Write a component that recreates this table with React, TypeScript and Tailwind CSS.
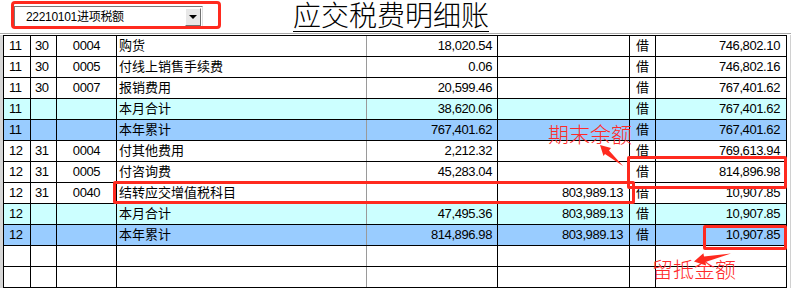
import React from "react";

type Row = {
  m?: string;
  d?: string;
  no?: string;
  memo?: string;
  debit?: string;
  credit?: string;
  dir?: string;
  bal?: string;
  tone?: "cyan" | "blue";
};

const rows: Row[] = [
  { m: "11", d: "30", no: "0004", memo: "购货", debit: "18,020.54", dir: "借", bal: "746,802.10" },
  { m: "11", d: "30", no: "0005", memo: "付线上销售手续费", debit: "0.06", dir: "借", bal: "746,802.16" },
  { m: "11", d: "30", no: "0007", memo: "报销费用", debit: "20,599.46", dir: "借", bal: "767,401.62" },
  { m: "11", memo: "本月合计", debit: "38,620.06", dir: "借", bal: "767,401.62", tone: "cyan" },
  { m: "11", memo: "本年累计", debit: "767,401.62", dir: "借", bal: "767,401.62", tone: "blue" },
  { m: "12", d: "31", no: "0004", memo: "付其他费用", debit: "2,212.32", dir: "借", bal: "769,613.94" },
  { m: "12", d: "31", no: "0005", memo: "付咨询费", debit: "45,283.04", dir: "借", bal: "814,896.98" },
  { m: "12", d: "31", no: "0040", memo: "结转应交增值税科目", credit: "803,989.13", dir: "借", bal: "10,907.85" },
  { m: "12", memo: "本月合计", debit: "47,495.36", credit: "803,989.13", dir: "借", bal: "10,907.85", tone: "cyan" },
  { m: "12", memo: "本年累计", debit: "814,896.98", credit: "803,989.13", dir: "借", bal: "10,907.85", tone: "blue" },
  {},
  {},
];

const font = { fontFamily: '"Liberation Sans", "Noto Sans CJK SC", sans-serif' };

const LedgerRow = ({ r }: { r: Row }) => {
  const bg =
    r.tone === "cyan" ? "bg-[#ccffff]" : r.tone === "blue" ? "bg-[#99ccff]" : "bg-white";
  return (
    <div
      className={`grid grid-cols-[27px_26px_60px_250px_131px_132px_26px_131px] h-[21px] border-b border-black text-[13px] leading-[20px] text-black ${bg}`}
    >
      <div className="border-r border-black pl-[5px] tracking-[-0.4px]">{r.m}</div>
      <div className="border-r border-black pl-[4px] tracking-[-0.4px]">{r.d}</div>
      <div className="border-r border-black text-center tracking-[-0.4px]">{r.no}</div>
      <div className="border-r border-[#9a9a9a] pl-[2px]">{r.memo}</div>
      <div className="border-r border-black text-right pr-[5px] tracking-[-0.4px]">{r.debit}</div>
      <div className="border-r border-black text-right pr-[6px] tracking-[-0.4px]">{r.credit}</div>
      <div className="border-r border-black text-center">{r.dir}</div>
      <div className="border-r border-black text-right pr-[6px] tracking-[-0.4px]">{r.bal}</div>
    </div>
  );
};

export default function App() {
  return (
    <div className="relative w-[791px] h-[291px] bg-white overflow-hidden" style={font}>
      {/* header: account picker + title */}
      <div className="flex h-[34px] border-b border-[#a8a8a8]">
        <div className="ml-[14px] mt-[6px] w-[189px] h-[21px] flex items-center border border-t-[#7a7a7a] border-l-[#7a7a7a] border-b-[#e0e0e0] border-r-[#e0e0e0] bg-white">
          <span className="flex-1 pl-[11px] text-[12px] leading-none tracking-[-0.3px]">22210101进项税额</span>
          <div className="w-[16px] h-[18px] mr-[1px] flex items-center justify-center bg-[#e8e8e8] border border-t-white border-l-white border-b-[#707070] border-r-[#707070]">
            <div className="w-0 h-0 border-l-[4px] border-r-[4px] border-t-[4px] border-l-transparent border-r-transparent border-t-black" />
          </div>
        </div>
        <div className="ml-[90px] mt-[2px] h-[30px] text-[28px] leading-[29px] font-light border-b border-black">
          应交税费明细账
        </div>
      </div>

      {/* grid */}
      <div className="flex mt-[1px]">
        <div className="w-[3px] bg-[#d6d6d6]" />
        <div className="border-l border-t border-black">
          {rows.map((r, i) => (
            <LedgerRow key={i} r={r} />
          ))}
        </div>
        <div className="w-[4px] border-r border-[#d0d0d0]" />
      </div>

      {/* annotations */}
      <div className="absolute left-[11px] top-[1px] w-[210px] h-[28px] border-[3px] border-[#ff2a1f] rounded-[4px]" />
      <div className="absolute left-[113px] top-[181px] w-[522px] h-[23px] border-[3px] border-[#ff2a1f] rounded-[2px]" />
      <div className="absolute left-[627px] top-[156px] w-[160px] h-[33px] border-[3px] border-[#ff2a1f] rounded-[2px]" />
      <div className="absolute left-[703px] top-[225px] w-[84px] h-[25px] border-[3px] border-[#ff2a1f] rounded-[2px]" />

      <div className="absolute left-[548px] top-[122px] text-[21px] leading-[26px] font-light text-[#ff2a2a]">期末余额</div>
      <div className="absolute left-[652px] top-[257px] text-[21px] leading-[26px] font-light text-[#ff2a2a]">留抵金额</div>

      <svg className="absolute left-0 top-0 pointer-events-none" width="791" height="291">
        <polygon
          points="600,145 611,148 609,150.5 623,166 605,154 603.5,156"
          fill="#ff2a1f"
        />
        <polygon
          points="694,261.5 706,265.5 705.5,262 731,253.5 704,256.5 703.4,253.2"
          fill="#ff2a1f"
        />
      </svg>
    </div>
  );
}
